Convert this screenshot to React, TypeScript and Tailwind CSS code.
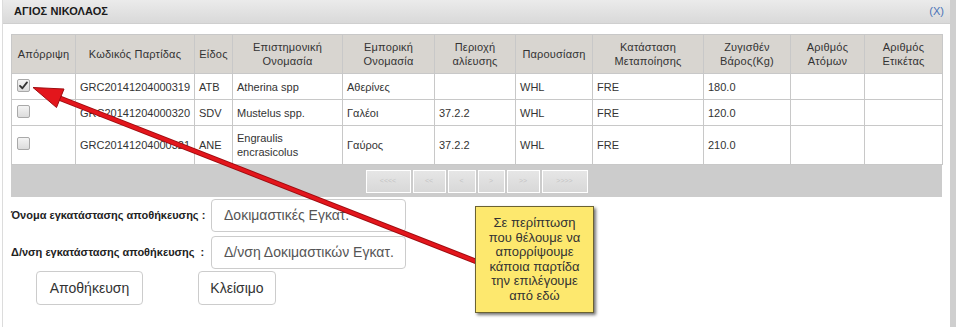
import React from 'react';

const cols = [64, 119, 38, 110, 92, 81, 77, 111, 87, 74, 78];

const headers = [
  ['Απόρριψη'],
  ['Κωδικός Παρτίδας'],
  ['Είδος'],
  ['Επιστημονική', 'Ονομασία'],
  ['Εμπορική', 'Ονομασία'],
  ['Περιοχή', 'αλίευσης'],
  ['Παρουσίαση'],
  ['Κατάσταση', 'Μεταποίησης'],
  ['Ζυγισθέν', 'Βάρος(Kg)'],
  ['Αριθμός', 'Ατόμων'],
  ['Αριθμός', 'Ετικέτας'],
];

const rows = [
  { checked: true, code: 'GRC20141204000319', kind: 'ATB', sci: ['Atherina spp'], com: 'Αθερίνες', area: '', pres: 'WHL', state: 'FRE', weight: '180.0', h: 'h-[26px]' },
  { checked: false, code: 'GRC20141204000320', kind: 'SDV', sci: ['Mustelus spp.'], com: 'Γαλέοι', area: '37.2.2', pres: 'WHL', state: 'FRE', weight: '120.0', h: 'h-[26px]' },
  { checked: false, code: 'GRC20141204000321', kind: 'ANE', sci: ['Engraulis', 'encrasicolus'], com: 'Γαύρος', area: '37.2.2', pres: 'WHL', state: 'FRE', weight: '210.0', h: 'h-[39px]' },
];

const pager = [
  { label: '<<<<', w: 'w-[45px]' },
  { label: '<<', w: 'w-[33px]' },
  { label: '<', w: 'w-[28px]' },
  { label: '>', w: 'w-[27px]' },
  { label: '>>', w: 'w-[33px]' },
  { label: '>>>>', w: 'w-[46px]' },
];

function Check({ checked }: { checked: boolean }) {
  return (
    <span className="inline-flex w-[13px] h-[13px] items-center justify-center rounded-[2px] border border-[#a9a9a9] bg-gradient-to-b from-[#f4f4f4] to-[#dcdcdc]">
      {checked && (
        <svg viewBox="0 0 12 12" className="w-[11px] h-[11px]">
          <path d="M2.2 6.4 L4.8 9 L9.8 2.6" fill="none" stroke="#333" strokeWidth="2" strokeLinecap="round" strokeLinejoin="round" />
        </svg>
      )}
    </span>
  );
}

const td = 'border border-[#c8c8c8] px-[4px] text-left align-middle leading-[14px]';

export default function App() {
  return (
    <div className="relative w-[956px] h-[327px] overflow-hidden bg-white text-[#333] font-['Liberation_Sans',Arial,sans-serif]">
      <div className="flex h-full">
        <div className="w-[3px] h-full bg-white border-r border-[#dcdcdc]" />
        <div className="flex-1 flex flex-col">
          <div className="h-[24px] flex items-center justify-between pl-[11px] pr-[6px] bg-gradient-to-b from-[#ebebeb] to-[#d9d9d9] border-b border-[#cfcfcf]">
            <span className="text-[11px] font-bold text-[#1a1a1a] tracking-[0.1px]">ΑΓΙΟΣ ΝΙΚΟΛΑΟΣ</span>
            <span className="text-[11px] text-[#4a73b8]">(X)</span>
          </div>
          <div className="pl-[8px] pt-[10px]">
            <table className="border-collapse table-fixed w-[931px] text-[11px]">
              <colgroup>
                {cols.map((w, i) => (
                  <col key={i} style={{ width: w }} />
                ))}
              </colgroup>
              <thead>
                <tr className="h-[39px] bg-[#d8d5d0]">
                  {headers.map((h, i) => (
                    <th key={i} className="border border-[#c8c8c8] font-normal text-center leading-[14px] px-[2px] text-[#333] tracking-[0.2px]">
                      {h.map((l, j) => (
                        <div key={j}>{l}</div>
                      ))}
                    </th>
                  ))}
                </tr>
              </thead>
              <tbody>
                {rows.map((r, i) => (
                  <tr key={i} className={r.h}>
                    <td className={`${td} pl-[5px]`}>
                      <Check checked={r.checked} />
                    </td>
                    <td className={td}>{r.code}</td>
                    <td className={td}>{r.kind}</td>
                    <td className={td}>
                      {r.sci.map((l, j) => (
                        <div key={j}>{l}</div>
                      ))}
                    </td>
                    <td className={td}>{r.com}</td>
                    <td className={td}>{r.area}</td>
                    <td className={td}>{r.pres}</td>
                    <td className={td}>{r.state}</td>
                    <td className={td}>{r.weight}</td>
                    <td className={td}></td>
                    <td className={td}></td>
                  </tr>
                ))}
              </tbody>
            </table>
            <div className="w-[931px] h-[32px] bg-[#cccccc] flex items-center justify-center">
              <div className="flex gap-[2px]">
                {pager.map((p, i) => (
                  <span key={i} className={`${p.w} h-[23px] flex items-center justify-center border border-white bg-gradient-to-b from-[#e6e6e6] to-[#d8d8d8] text-[7px] text-[#c4c4c4]`}>
                    {p.label}
                  </span>
                ))}
              </div>
            </div>
            <div className="flex flex-col gap-[4px] pt-[2px]">
              <div className="flex items-center">
                <span className="w-[200px] text-[11px] font-bold text-[#222]">Όνομα εγκατάστασης αποθήκευσης :</span>
                <div className="w-[195px] h-[33px] flex items-center pl-[12px] border border-[#cccccc] rounded-[4px] text-[14px] text-[#555]">
                  Δοκιμαστικές Εγκατ.
                </div>
              </div>
              <div className="flex items-center">
                <span className="w-[200px] text-[11px] font-bold text-[#222]">Δ/νση εγκατάστασης αποθήκευσης&nbsp;&nbsp;:</span>
                <div className="w-[195px] h-[33px] flex items-center pl-[12px] border border-[#cccccc] rounded-[4px] text-[14px] text-[#555]">
                  Δ/νση Δοκιμαστικών Εγκατ.
                </div>
              </div>
            </div>
            <div className="flex pl-[25px] pt-[2px] gap-[55px]">
              <div className="w-[107px] h-[34px] flex items-center justify-center border border-[#cccccc] rounded-[4px] text-[14px] text-[#333]">
                Αποθήκευση
              </div>
              <div className="w-[78px] h-[34px] flex items-center justify-center border border-[#cccccc] rounded-[4px] text-[14px] text-[#333]">
                Κλείσιμο
              </div>
            </div>
          </div>
        </div>
        <div className="w-[6px] h-full bg-[#cfcfcf]" />
      </div>

      <svg className="absolute inset-0 pointer-events-none" width="956" height="327" viewBox="0 0 956 327">
        <line x1="58" y1="97.5" x2="480" y2="263" stroke="#9e0c10" strokeWidth="5.5" strokeLinecap="round" />
        <line x1="58" y1="97.5" x2="480" y2="263" stroke="#e3161c" strokeWidth="3.5" strokeLinecap="round" />
        <polygon points="33,87.5 56.5,107.5 64,89" fill="#e3161c" stroke="#9e0c10" strokeWidth="1" strokeLinejoin="round" />
      </svg>

      <div className="absolute left-[475px] top-[206px] w-[119px] h-[107px] bg-[#fde86e] border border-[#6b6232] shadow-[2px_2px_3px_rgba(0,0,0,0.55)] pt-[9px] text-center text-[13px] leading-[14.6px] text-[#333]">
        <div>Σε περίπτωση</div>
        <div>που θέλουμε να</div>
        <div>απορρίψουμε</div>
        <div>κάποια παρτίδα</div>
        <div>την επιλέγουμε</div>
        <div>από εδώ</div>
      </div>
    </div>
  );
}
